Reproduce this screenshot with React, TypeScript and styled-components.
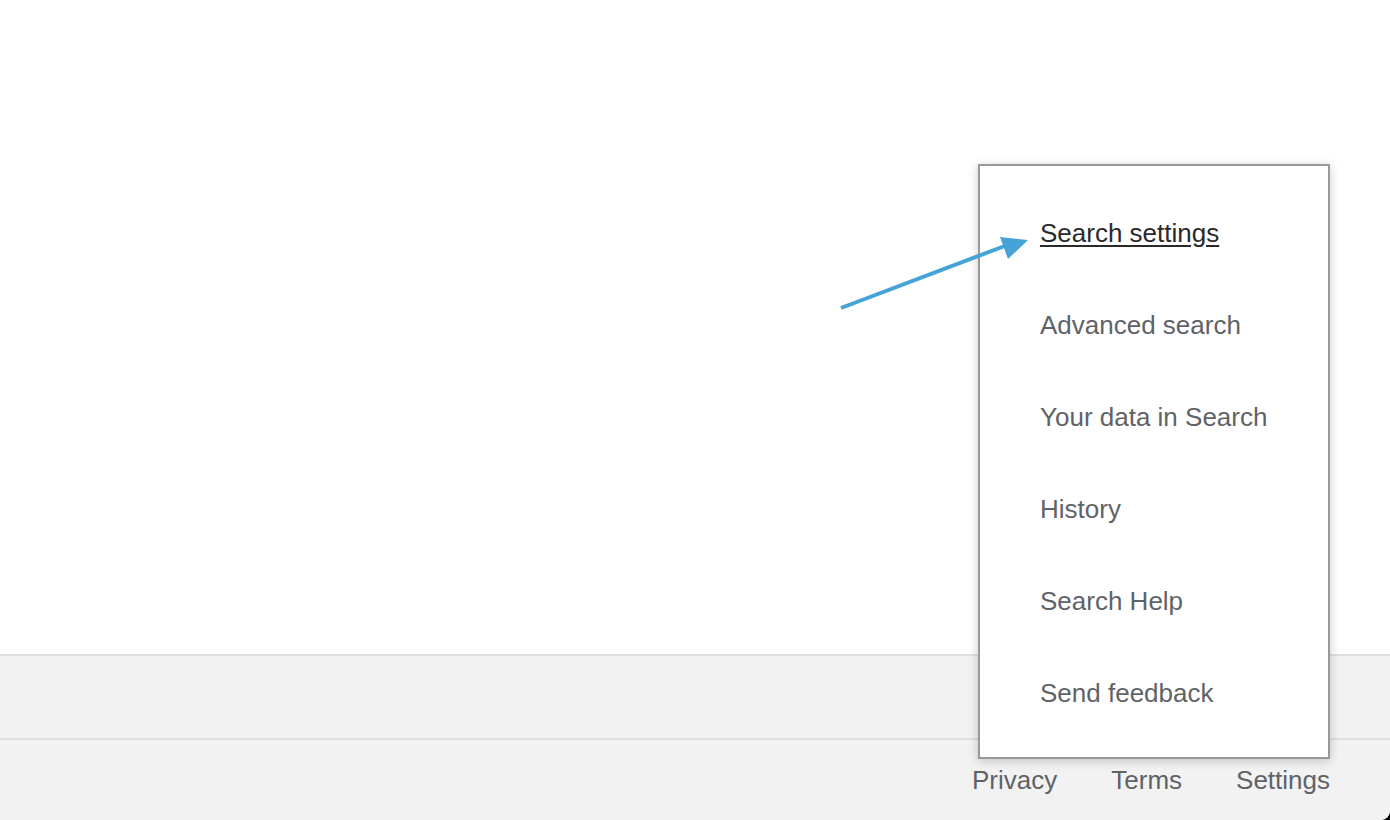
import React from "react";
import styled, { createGlobalStyle } from "styled-components";

const GlobalStyle = createGlobalStyle`
  html, body {
    margin: 0;
    padding: 0;
    background: #000;
  }
  body {
    font-family: "Liberation Sans", Arial, sans-serif;
  }
`;

const menuItems = [
  "Search settings",
  "Advanced search",
  "Your data in Search",
  "History",
  "Search Help",
  "Send feedback"
];

const footerLinks = ["Privacy", "Terms", "Settings"];

const App = () => {
  return (
    <>
      <GlobalStyle />
      <Page>
        <Content />
        <Footer>
          <FooterRow />
          <FooterRow>
            <FooterLinks>
              {footerLinks.map(link => (
                <FooterLink key={link} href="#">
                  {link}
                </FooterLink>
              ))}
            </FooterLinks>
          </FooterRow>
        </Footer>

        <Menu>
          {menuItems.map((item, i) => (
            <MenuItem key={item}>
              <MenuLink href="#" active={i === 0}>
                {item}
              </MenuLink>
            </MenuItem>
          ))}
        </Menu>

        <Arrow width="200" height="90" viewBox="0 0 200 90">
          <line x1="1" y1="80" x2="170" y2="16" stroke="#45a3d7" strokeWidth="4" />
          <polygon points="188,12 160,9 168,31" fill="#45a3d7" />
        </Arrow>
      </Page>
    </>
  );
};

const Page = styled.div`
  position: relative;
  height: 820px;
  display: flex;
  flex-direction: column;
  background: #fff;
  border-bottom-right-radius: 9px;
  overflow: hidden;
`;

const Content = styled.div`
  flex: 1;
`;

const Footer = styled.footer`
  background: #f2f2f2;
  display: flex;
  flex-direction: column;
`;

const FooterRow = styled.div`
  height: 82px;
  border-top: 2px solid #dfdfdf;
  display: flex;
  align-items: center;
  justify-content: flex-end;
  &:last-child {
    height: 80px;
  }
`;

const FooterLinks = styled.div`
  display: flex;
  gap: 54px;
  padding-right: 60px;
`;

const FooterLink = styled.a`
  font-size: 26px;
  color: #5f6368;
  text-decoration: none;
`;

const Menu = styled.ul`
  position: absolute;
  left: 978px;
  top: 164px;
  width: 348px;
  margin: 0;
  padding: 21px 0 18px;
  list-style: none;
  background: #fff;
  border: 2px solid #999;
  box-shadow: 0 2px 10px rgba(0, 0, 0, 0.2);
`;

const MenuItem = styled.li`
  height: 92px;
  display: flex;
  align-items: center;
  padding-left: 60px;
`;

const MenuLink = styled.a<{ active?: boolean }>`
  font-size: 26px;
  color: ${p => (p.active ? "#2a2a2a" : "#5f6368")};
  text-decoration: ${p => (p.active ? "underline" : "none")};
  text-underline-offset: 3px;
`;

const Arrow = styled.svg`
  position: absolute;
  left: 840px;
  top: 228px;
  overflow: visible;
`;

export default App;
